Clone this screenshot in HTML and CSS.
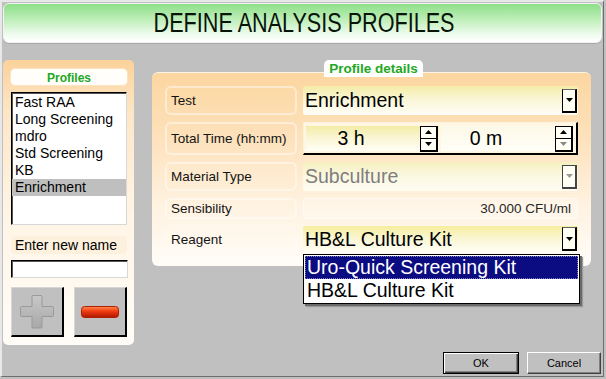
FILE: index.html
```html
<!DOCTYPE html>
<html lang="en">
<head>
  <meta charset="UTF-8" />
  <title>Define Analysis Profiles</title>
  <link rel="stylesheet" href="styles.css">
</head>
<body>
  <div class="window">
    <header class="title-bar"><span>DEFINE ANALYSIS PROFILES</span></header>

    <div class="main">
      <aside class="profiles-panel">
        <div class="caption">Profiles</div>
        <ul class="profile-list">
          <li>Fast RAA</li>
          <li>Long Screening</li>
          <li>mdro</li>
          <li>Std Screening</li>
          <li>KB</li>
          <li class="selected">Enrichment</li>
        </ul>
        <div class="name-label">Enter new name</div>
        <input class="name-input" type="text" />
        <div class="tool-buttons">
          <button class="tool-btn" disabled>
            <svg width="38" height="36" viewBox="0 0 38 36">
              <defs>
                <linearGradient id="gp" x1="0" y1="0" x2="0" y2="1">
                  <stop offset="0" stop-color="#c8c8c8" />
                  <stop offset="1" stop-color="#a8a8a8" />
                </linearGradient>
              </defs>
              <path d="M15 1.5h8a1 1 0 0 1 1 1V12.5h10.5a1 1 0 0 1 1 1v8a1 1 0 0 1-1 1H24v10.5a1 1 0 0 1-1 1h-8a1 1 0 0 1-1-1V22.5H3.5a1 1 0 0 1-1-1v-8a1 1 0 0 1 1-1H14V2.5a1 1 0 0 1 1-1z" fill="url(#gp)" stroke="#999" stroke-width="1" />
            </svg>
          </button>
          <button class="tool-btn">
            <svg width="38" height="12" viewBox="0 0 38 12">
              <defs>
                <linearGradient id="gm" x1="0" y1="0" x2="0" y2="1">
                  <stop offset="0" stop-color="#ff8a50" />
                  <stop offset="0.45" stop-color="#f03a10" />
                  <stop offset="1" stop-color="#a81800" />
                </linearGradient>
              </defs>
              <rect x="0.5" y="0.5" width="37" height="11" rx="3" fill="url(#gm)" stroke="#b02000" stroke-width="1" />
            </svg>
          </button>
        </div>
      </aside>

      <section class="details">
        <div class="details-tab">Profile details</div>
        <div class="details-panel">
          <div class="field-label">Test</div>
          <div class="combo">
            <span class="combo-text">Enrichment</span>
            <span class="arrow-btn"><svg width="7" height="4" viewBox="0 0 7 4"><path d="M0 0h7L3.5 4z" /></svg></span>
          </div>

          <div class="field-label">Total Time (hh:mm)</div>
          <div class="time-box">
            <div class="spin-field hours">
              <span class="spin-text">3 h</span>
              <span class="spin-btns">
                <span><svg width="7" height="4" viewBox="0 0 7 4"><path d="M3.5 0L7 4H0z" /></svg></span>
                <span><svg width="7" height="4" viewBox="0 0 7 4"><path d="M0 0h7L3.5 4z" /></svg></span>
              </span>
            </div>
            <div class="spin-field minutes">
              <span class="spin-text">0 m</span>
              <span class="spin-btns">
                <span><svg width="7" height="4" viewBox="0 0 7 4"><path d="M3.5 0L7 4H0z" /></svg></span>
                <span class="off"><svg width="7" height="4" viewBox="0 0 7 4"><path d="M0 0h7L3.5 4z" /></svg></span>
              </span>
            </div>
          </div>

          <div class="field-label">Material Type</div>
          <div class="combo disabled">
            <span class="combo-text">Subculture</span>
            <span class="arrow-btn"><svg width="7" height="4" viewBox="0 0 7 4"><path d="M0 0h7L3.5 4z" /></svg></span>
          </div>

          <div class="field-label">Sensibility</div>
          <div class="readout">30.000 CFU/ml</div>

          <div class="field-label plain">Reagent</div>
          <div class="combo open">
            <span class="combo-text">HB&amp;L Culture Kit</span>
            <span class="arrow-btn"><svg width="7" height="4" viewBox="0 0 7 4"><path d="M0 0h7L3.5 4z" /></svg></span>
            <ul class="dropdown">
              <li class="active">Uro-Quick Screening Kit</li>
              <li>HB&amp;L Culture Kit</li>
            </ul>
          </div>
        </div>
      </section>
    </div>

    <footer class="actions">
      <button class="dlg-btn default">OK</button>
      <button class="dlg-btn">Cancel</button>
    </footer>
  </div>
</body>
</html>
```

FILE: styles.css
```css
* {
  box-sizing: border-box;
}

body {
  margin: 0;
  background: #c0c0c0;
  font-family: 'Liberation Sans', Arial, sans-serif;
  color: #000;
}

ul {
  margin: 0;
  padding: 0;
  list-style: none;
}

.window {
  width: 604px;
  height: 377px;
  padding: 1px 1px 0 1px;
  background: #c0c0c0;
  border-left: 2px solid #e8e8e8;
  border-top: 2px solid #e8e8e8;
  border-right: 1px solid #6e6e6e;
  border-bottom: 1px solid #6e6e6e;
}

/* header */
.title-bar {
  height: 40px;
  display: flex;
  align-items: center;
  justify-content: center;
  border: 1px solid #f2f2f2;
  border-radius: 6px;
  background: linear-gradient(#8ddf88, #bdeeb8 40%, #effcee 80%, #ffffff);
  box-shadow: 0 1px 0 #a8a8a8;
}

.title-bar span {
  display: inline-block;
  margin-left: 4px;
  font-size: 27px;
  color: #081408;
  transform: scaleX(0.8);
}

.main {
  display: flex;
  gap: 18px;
  height: 285px;
  margin-top: 17px;
}

/* left panel */
.profiles-panel {
  width: 131px;
  padding: 8px 6px 8px 7px;
  border-radius: 5px;
  background: linear-gradient(#fbd29a, #fde6c6 18%, #fff5e6 55%, #fffcf7);
}

.caption {
  height: 18px;
  line-height: 18px;
  text-align: center;
  font-size: 12px;
  font-weight: bold;
  color: #22a822;
  background: #fffefb;
  border: 1px solid #fde3bf;
  border-radius: 5px;
}

.profile-list {
  height: 133px;
  margin: 6px 1px 0 1px;
  padding-top: 1px;
  background: #fff;
  border: 1px solid;
  border-color: #000 #d8d8d8 #d8d8d8 #000;
  box-shadow: inset 1px 1px 0 #555;
}

.profile-list li {
  height: 17px;
  line-height: 17px;
  padding-left: 3px;
  font-size: 14px;
}

.profile-list li.selected {
  background: #bfbfbf;
}

.name-label {
  height: 20px;
  line-height: 19px;
  margin-top: 10px;
  padding-left: 4px;
  font-size: 14px;
  background: #fdf1de;
  border: 1px solid #fff7ec;
  border-radius: 5px;
}

.name-input {
  display: block;
  width: 117px;
  height: 18px;
  margin: 5px 0 0 1px;
  padding: 0;
  background: #fff;
  border: 1px solid;
  border-color: #000 #d8d8d8 #d8d8d8 #000;
  box-shadow: inset 1px 1px 0 #555;
}

.tool-buttons {
  display: flex;
  gap: 10px;
  margin: 9px 1px 0 1px;
}

.tool-btn {
  width: 53px;
  height: 50px;
  padding: 0;
  display: flex;
  align-items: center;
  justify-content: center;
  background: #c0c0c0;
  border-top: 1px solid #d6d6d6;
  border-left: 1px solid #d6d6d6;
  border-right: 2px solid #000;
  border-bottom: 2px solid #000;
}

/* right panel */
.details {
  width: 439px;
  display: flex;
  flex-direction: column;
}

.details-tab {
  position: relative;
  z-index: 1;
  align-self: center;
  height: 17px;
  line-height: 17px;
  margin: 0 0 -5px 4px;
  padding: 0 5px;
  font-size: 13.5px;
  font-weight: bold;
  color: #22a822;
  background: #fff;
  border-radius: 5px 5px 0 0;
}

.details-panel {
  display: grid;
  grid-template-columns: 132px 1fr;
  grid-template-rows: 29px 33px 29px 21px 26px;
  column-gap: 6px;
  row-gap: 7px;
  padding: 13px 13px 14px 13px;
  border-top: 1px solid #fff4e4;
  border-radius: 6px;
  background: linear-gradient(#fcd6a0, #fde2bd 35%, #fff3e2 70%, #fffcf8);
}

.field-label {
  display: flex;
  align-items: center;
  padding-left: 4px;
  font-size: 13.5px;
  color: #141414;
  border: 2px solid rgba(255, 255, 255, 0.45);
  border-radius: 6px;
}

.field-label.plain {
  border-color: rgba(255, 255, 255, 0.2);
}

.combo {
  position: relative;
  display: flex;
  align-items: center;
  justify-content: space-between;
  padding: 0 1px 0 2px;
  background: linear-gradient(#f4eca6, #faf6d6 45%, #fffef6);
  border-radius: 2px;
}

.combo-text {
  font-size: 19.5px;
}

.combo.disabled {
  background: linear-gradient(#f6f0be, #fbf8e2 50%, #fffcf2);
}

.combo.disabled .combo-text {
  color: #7e7e7e;
}

.arrow-btn {
  width: 15px;
  height: 24px;
  display: flex;
  align-items: center;
  justify-content: center;
  background: #fffff4;
  border: 1px solid #000;
  border-top-color: #666;
  border-right-width: 2px;
  border-bottom-width: 2px;
}

.combo.disabled .arrow-btn {
  border-color: #444;
}

.combo.disabled .arrow-btn path {
  fill: #9a9a9a;
}

.time-box {
  display: flex;
  gap: 2px;
  padding: 3px 2px 2px 2px;
  border-top: 1px solid #fff2dc;
  border-left: 1px solid #fff2dc;
  border-right: 2px solid #000;
  border-bottom: 2px solid #000;
  background: #fff6e4;
}

.spin-field {
  flex: 1;
  display: flex;
  align-items: center;
  justify-content: space-between;
  padding-left: 2px;
}

.spin-field.hours {
  background: linear-gradient(#f4eca6, #faf6d6 50%, #fffef6);
}

.spin-field.minutes {
  background: linear-gradient(#fdf9e8, #fffef8);
}

.spin-text {
  flex: 1;
  text-align: center;
  padding-right: 26px;
  font-size: 19.5px;
}

.spin-btns {
  display: flex;
  flex-direction: column;
  width: 18px;
  height: 26px;
  margin-right: 1px;
}

.spin-btns span {
  flex: 1;
  display: flex;
  align-items: center;
  justify-content: center;
  background: #fffff6;
  border: 1px solid #000;
  border-right-width: 2px;
}

.spin-btns span + span {
  border-top: none;
  border-bottom-width: 2px;
}

.spin-btns span.off path {
  fill: #8a8a8a;
}

.readout {
  display: flex;
  align-items: center;
  justify-content: flex-end;
  padding-right: 6px;
  font-size: 13.5px;
  color: #262626;
  background: rgba(255, 255, 255, 0.25);
  border: 1px solid rgba(255, 255, 255, 0.45);
  border-radius: 3px;
}

.combo.open {
  background: linear-gradient(#f6ee9e, #faf6d4 50%, #fffef6);
}

.dropdown {
  position: absolute;
  top: calc(100% + 2px);
  left: 0;
  width: 277px;
  height: 50px;
  padding: 1px;
  background: #fff;
  border: 1px solid #000;
  box-shadow: 2px 2px 0 #6a6a6a, 3px 3px 1px #9a9a9a;
  z-index: 2;
}

.dropdown li {
  height: 23px;
  line-height: 23px;
  padding-left: 2px;
  font-size: 19.5px;
}

.dropdown li.active {
  background: #0c0c82;
  color: #fff;
  outline: 1px dotted #8080c0;
  outline-offset: -1px;
}

/* footer */
.actions {
  display: flex;
  justify-content: flex-end;
  gap: 8px;
  margin-top: 7px;
  padding-right: 1px;
}

.dlg-btn {
  width: 74px;
  height: 22px;
  padding: 0;
  font-family: 'Liberation Sans', Arial, sans-serif;
  font-size: 11px;
  color: #000;
  background: #c0c0c0;
  border: 1px solid;
  border-color: #fff #404040 #404040 #fff;
  box-shadow: inset -1px -1px 0 #808080;
}

.dlg-btn.default {
  width: 76px;
  border: 1px solid #000;
  box-shadow: inset 1px 1px 0 #fff, inset -1px -1px 0 #404040, inset -2px -2px 0 #808080;
}
```
